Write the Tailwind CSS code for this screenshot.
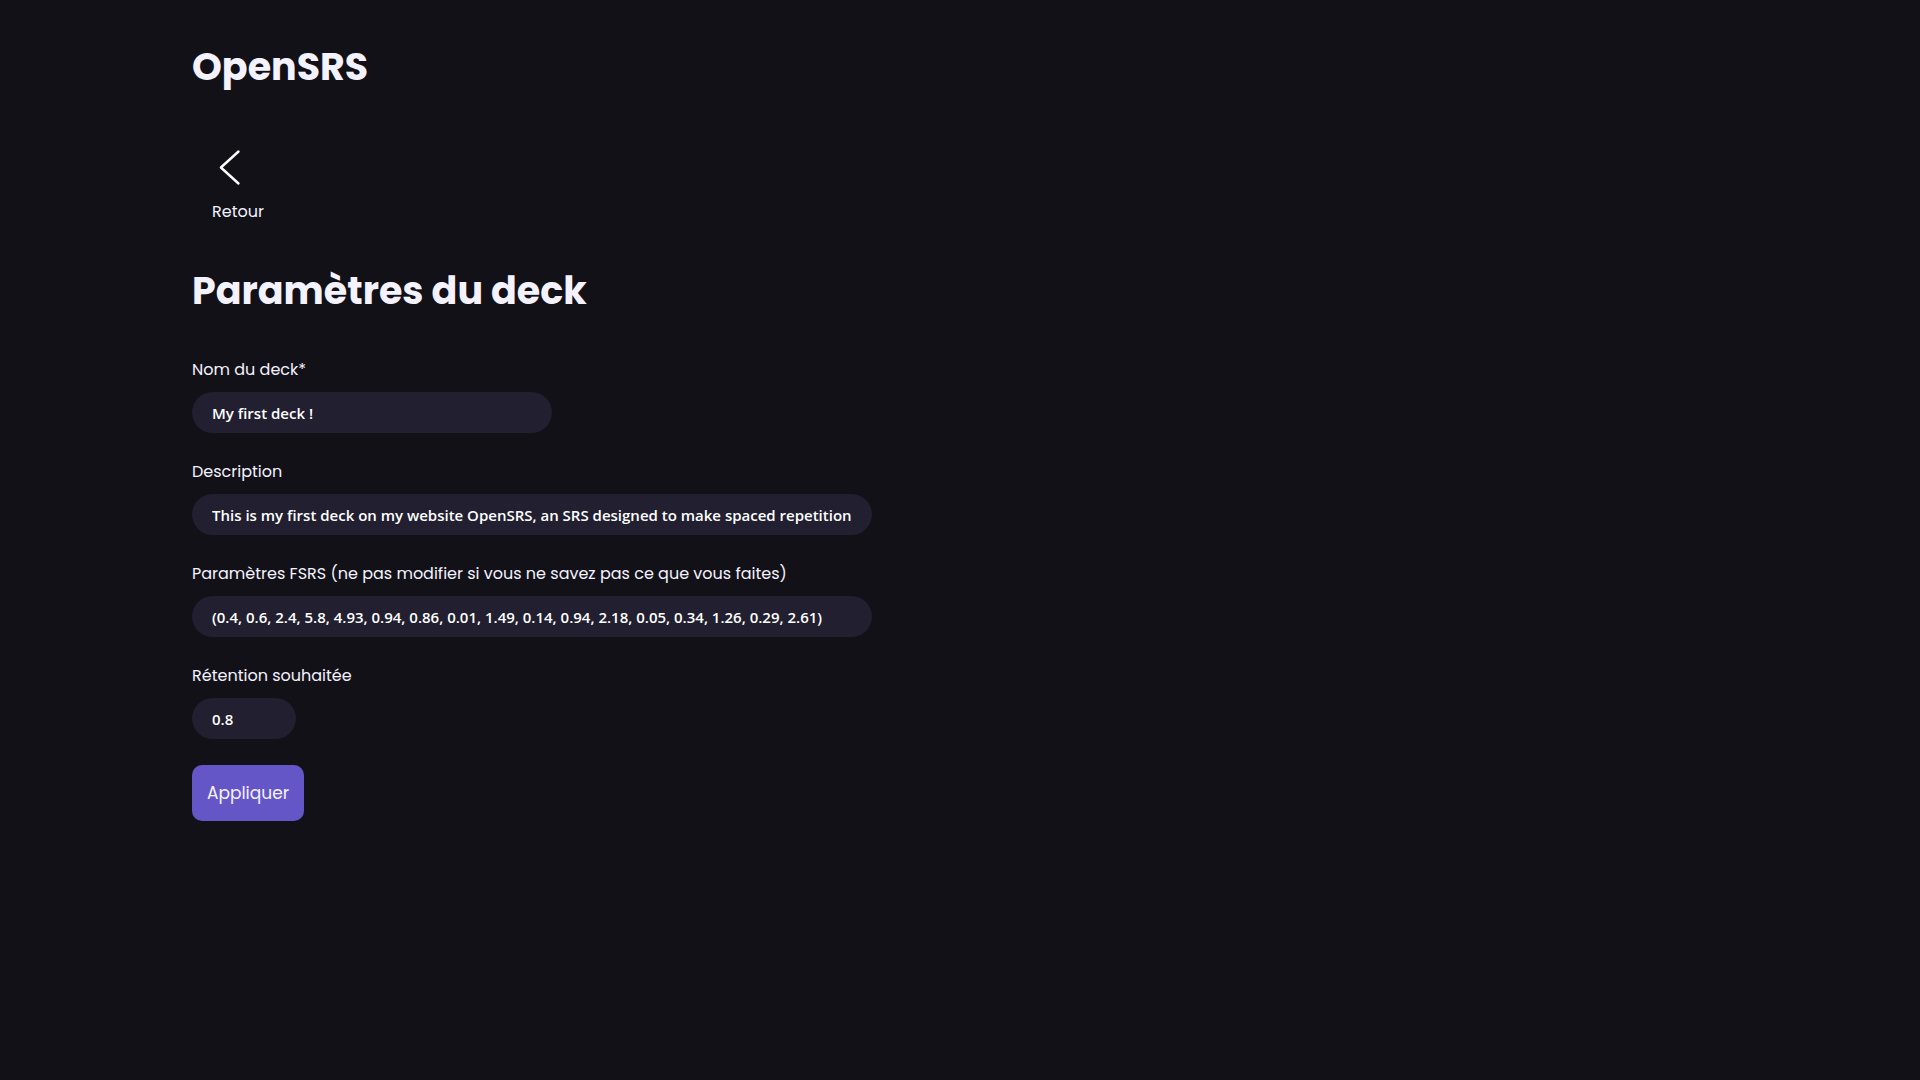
<!DOCTYPE html>
<html lang="fr">
<head>
<meta charset="utf-8">
<meta name="viewport" content="width=device-width, initial-scale=1">
<title>OpenSRS</title>
<script src="https://cdn.jsdelivr.net/npm/@tailwindcss/browser@4"></script>
</head>
<body class="min-h-screen bg-[#121118] px-[10%] pt-9 pb-16 font-[Poppins,Inter,sans-serif] text-[16px] leading-6 text-[#f4f2ff]">
<header>
  <h1 class="text-[38px] leading-[62px] font-bold">OpenSRS</h1>
</header>
<nav class="mt-[46px] flex">
  <a href="#" class="flex flex-col px-5 pt-1">
    <svg class="h-10 w-10" viewBox="0 0 40 40" fill="none" stroke="#fff" stroke-width="2.4" stroke-linecap="round" stroke-linejoin="round" aria-hidden="true"><path d="M26.5 3.5 8.9 19.5 26.5 35.5"/></svg>
    <span class="mt-3">Retour</span>
  </a>
</nav>
<main>
  <h2 class="mt-9 text-[38px] leading-[62px] font-bold">Paramètres du deck</h2>
  <form class="mt-9 flex flex-col items-start gap-[26px]">
    <div class="flex w-full flex-col gap-[27px]">
      <div class="flex flex-col gap-[10px]">
        <label for="name">Nom du deck*</label>
        <input id="name" type="text" value="My first deck !" class="h-[41px] w-[360px] max-w-full rounded-full bg-[#211f30] px-5 font-['Segoe_UI','Open_Sans',sans-serif] text-[15px] font-semibold text-white">
      </div>
      <div class="flex flex-col gap-[10px]">
        <label for="desc">Description</label>
        <input id="desc" type="text" value="This is my first deck on my website OpenSRS, an SRS designed to make spaced repetition" class="h-[41px] w-[680px] max-w-full rounded-full bg-[#211f30] px-5 font-['Segoe_UI','Open_Sans',sans-serif] text-[15px] font-semibold text-white">
      </div>
      <div class="flex flex-col gap-[10px]">
        <label for="fsrs">Paramètres FSRS (ne pas modifier si vous ne savez pas ce que vous faites)</label>
        <input id="fsrs" type="text" value="(0.4, 0.6, 2.4, 5.8, 4.93, 0.94, 0.86, 0.01, 1.49, 0.14, 0.94, 2.18, 0.05, 0.34, 1.26, 0.29, 2.61)" class="h-[41px] w-[680px] max-w-full rounded-full bg-[#211f30] px-5 font-['Segoe_UI','Open_Sans',sans-serif] text-[15px] font-semibold text-white">
      </div>
      <div class="flex flex-col gap-[10px]">
        <label for="retention">Rétention souhaitée</label>
        <input id="retention" type="text" inputmode="decimal" value="0.8" class="h-[41px] w-[104px] rounded-full bg-[#211f30] px-5 font-['Segoe_UI','Open_Sans',sans-serif] text-[15px] font-semibold text-white">
      </div>
    </div>
    <button type="submit" class="h-14 rounded-[10px] bg-[#6556c8] px-[15px] text-[17px]">Appliquer</button>
  </form>
</main>
</body>
</html>
